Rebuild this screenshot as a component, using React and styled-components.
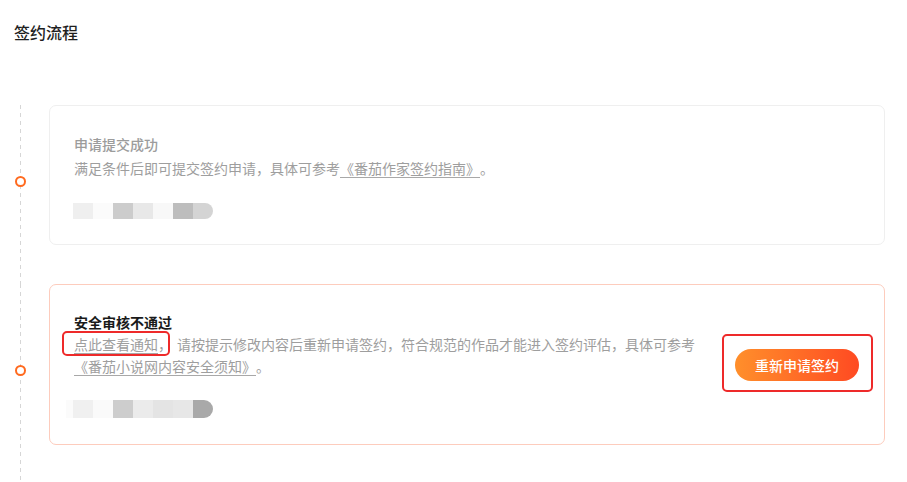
import React from 'react';
import styled, { createGlobalStyle, css } from 'styled-components';

const GlobalStyle = createGlobalStyle`
	html, body {
		margin: 0;
		padding: 0;
		background: #fff;
	}
	body {
		font-family: 'Noto Sans CJK SC', 'Noto Sans', sans-serif;
		color: #222;
		text-spacing-trim: space-all;
	}
`;

const Page = styled.div`
	padding: 20px 22px 0 0;
	width: 907px;
	box-sizing: border-box;
`;

const Title = styled.h2`
	margin: 0 0 61px 14px;
	font-size: 16px;
	line-height: 24px;
	font-weight: 500;
	color: #1f1f1f;
`;

const Timeline = styled.div`
	display: flex;
	flex-direction: column;
`;

const Item = styled.div`
	display: flex;
	align-items: stretch;
`;

// the dashed rail runs on through the gap below each card
const Rail = styled.div`
	width: 49px;
	flex: none;
	display: flex;
	align-items: center;
	padding-bottom: ${(p) => p.$gap || 0}px;
	background: linear-gradient(#d6d6d6 55%, transparent 0) 20px 0 / 1px 8px repeat-y;
`;

const Dot = styled.span`
	display: block;
	width: 7px;
	height: 7px;
	margin-left: 15px;
	margin-top: ${(p) => p.$shift}px;
	border: 2px solid #ff6a1f;
	border-radius: 50%;
	background: #fff;
`;

const Card = styled.div`
	flex: 1;
	display: flex;
	align-items: center;
	box-sizing: border-box;
	min-height: ${(p) => p.$height}px;
	margin-bottom: ${(p) => p.$gap || 0}px;
	padding: 0 25px 0 24px;
	border: 1px solid ${(p) => (p.$alert ? '#fdccbd' : '#efefef')};
	border-radius: 7px;
	background: #fff;
`;

const Body = styled.div`
	flex: 1;
	display: flex;
	flex-direction: column;
	max-width: 622px;
	margin-right: auto;
`;

const Heading = styled.div`
	font-size: 14px;
	line-height: ${(p) => (p.$alert ? 22 : 24)}px;
	font-weight: ${(p) => (p.$alert ? 600 : 500)};
	color: ${(p) => (p.$alert ? '#1a1a1a' : '#9c9c9c')};
`;

const Desc = styled.div`
	font-size: 14px;
	line-height: ${(p) => p.$lh}px;
	color: #9e9e9e;
`;

const Link = styled.a`
	color: #9e9e9e;
	text-decoration: underline;
	text-underline-offset: 3px;
	text-decoration-color: #a8a8a8;
	cursor: pointer;
`;

const Marked = styled.span`
	position: relative;
	display: inline-block;
	margin-right: 5px;
	&::after {
		content: '';
		position: absolute;
		left: -12px;
		right: 2px;
		top: -2px;
		bottom: -1px;
		border: 2px solid #ee2a2a;
		border-radius: 5px;
		pointer-events: none;
	}
`;

const Mosaic = styled.div`
	display: flex;
	height: ${(p) => p.$h}px;
	margin-top: ${(p) => p.$top}px;
	margin-left: -1px;
`;

const Tile = styled.span`
	width: ${(p) => p.$w || 20}px;
	background: ${(p) => p.$c};
	${(p) =>
		p.$end &&
		css`
			border-radius: 0 9px 9px 0;
		`}
`;

const ActionWrap = styled.div`
	position: relative;
	flex: none;
	&::after {
		content: '';
		position: absolute;
		left: -13px;
		right: -14px;
		top: -15px;
		bottom: -11px;
		border: 2px solid #ee2a2a;
		border-radius: 5px;
		pointer-events: none;
	}
`;

const PrimaryButton = styled.button`
	width: 124px;
	height: 32px;
	border: none;
	border-radius: 16px;
	background: linear-gradient(90deg, #ff8f2b 0%, #ff6a26 55%, #ff4a22 100%);
	color: #fff;
	font-family: inherit;
	font-size: 14px;
	font-weight: 500;
	outline: none;
	cursor: pointer;
	:hover {
		opacity: 0.9;
	}
`;

const mosaicA = ['#efefef', '#fbfbfb', '#cccccc', '#e8e8e8', '#f8f8f8', '#bdbdbd', '#d4d4d4'];
const mosaicB = ['#f0f0f0', '#fafafa', '#cdcdcd', '#ebebeb', '#e4e4e4', '#e7e7e7', '#a9a9a9'];

function Blurred({ colors, h, top, lead }) {
	return (
		<Mosaic $h={h} $top={top}>
			{lead && <Tile $w={7} $c={lead} style={{ marginLeft: -7 }} />}
			{colors.map((c, i) => (
				<Tile key={i} $c={c} $end={i === colors.length - 1} />
			))}
		</Mosaic>
	);
}

export default function App() {
	return (
		<>
			<GlobalStyle />
			<Page>
				<Title>签约流程</Title>
				<Timeline>
					<Item>
						<Rail $gap={39}>
							<Dot $shift={12} />
						</Rail>
						<Card $height={140} $gap={39}>
							<Body>
								<Heading>申请提交成功</Heading>
								<Desc $lh={24}>
									满足条件后即可提交签约申请，具体可参考<Link>《番茄作家签约指南》</Link>。
								</Desc>
								<Blurred colors={mosaicA} h={16} top={23} />
							</Body>
						</Card>
					</Item>
					<Item>
						<Rail $gap={37}>
							<Dot $shift={12} />
						</Rail>
						<Card $height={161} $gap={37} $alert>
							<Body>
								<Heading $alert>安全审核不通过</Heading>
								<Desc $lh={22}>
									<Marked>
										<Link>点此查看通知</Link>，
									</Marked>
									请按提示修改内容后重新申请签约，符合规范的作品才能进入签约评估，具体可参考
									<Link>《番茄小说网内容安全须知》</Link>。
								</Desc>
								<Blurred colors={mosaicB} h={18} top={23} lead="#fbfbfb" />
							</Body>
							<ActionWrap>
								<PrimaryButton>重新申请签约</PrimaryButton>
							</ActionWrap>
						</Card>
					</Item>
				</Timeline>
			</Page>
		</>
	);
}
